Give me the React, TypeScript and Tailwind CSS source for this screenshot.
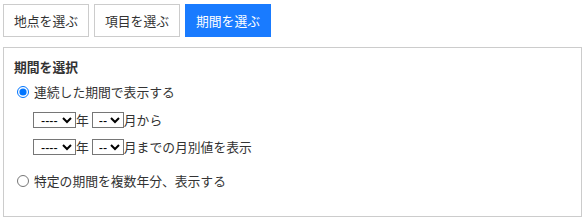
import { useState } from 'react';

const TABS = ['地点を選ぶ', '項目を選ぶ', '期間を選ぶ'];

function YearMonth({ suffix }: { suffix: string }) {
  return (
    <div className="flex h-[27px] items-center">
      <select className="h-[16px] w-[43px] border border-[#767676] bg-white pl-[3px] font-['Liberation_Sans',sans-serif] text-[12.5px] leading-[14px] text-black">
        <option>----</option>
      </select>
      <span>年</span>
      <select className="ml-[3px] h-[16px] w-[32px] border border-[#767676] bg-white pl-[2px] font-['Liberation_Sans',sans-serif] text-[12.5px] leading-[14px] text-black">
        <option>--</option>
      </select>
      <span>{suffix}</span>
    </div>
  );
}

export default function App() {
  const [mode, setMode] = useState('range');
  const active = 2;

  return (
    <div
      className="px-[3px] pt-[4px] text-[12.8px] text-[#333]"
      style={{ fontFamily: '"Noto Sans CJK JP", "Noto Sans", sans-serif' }}
    >
      <div className="flex gap-[5px]">
        {TABS.map((label, i) => (
          <button
            key={label}
            className={
              i === active
                ? 'h-[33px] w-[86px] border border-[#197bff] bg-[#197bff] text-white'
                : 'h-[33px] w-[86px] border border-[#cccccc] bg-white text-[#333]'
            }
          >
            {label}
          </button>
        ))}
      </div>

      <div className="mt-[10px] h-[170px] w-[579px] border border-[#cccccc] px-[10px] pt-[9px]">
        <div className="h-[20px] font-bold leading-[20px]">期間を選択</div>

        <label className="mt-[6px] flex h-[18px] items-center">
          <input
            type="radio"
            name="mode"
            checked={mode === 'range'}
            onChange={() => setMode('range')}
            className="ml-[3px] mr-[5px] size-[12px]"
          />
          連続した期間で表示する
        </label>

        <div className="ml-[19px] mt-[5px]">
          <YearMonth suffix="月から" />
          <YearMonth suffix="月までの月別値を表示" />
        </div>

        <label className="mt-[12px] flex h-[18px] items-center">
          <input
            type="radio"
            name="mode"
            checked={mode === 'years'}
            onChange={() => setMode('years')}
            className="ml-[3px] mr-[5px] size-[12px]"
          />
          特定の期間を複数年分、表示する
        </label>
      </div>
    </div>
  );
}
